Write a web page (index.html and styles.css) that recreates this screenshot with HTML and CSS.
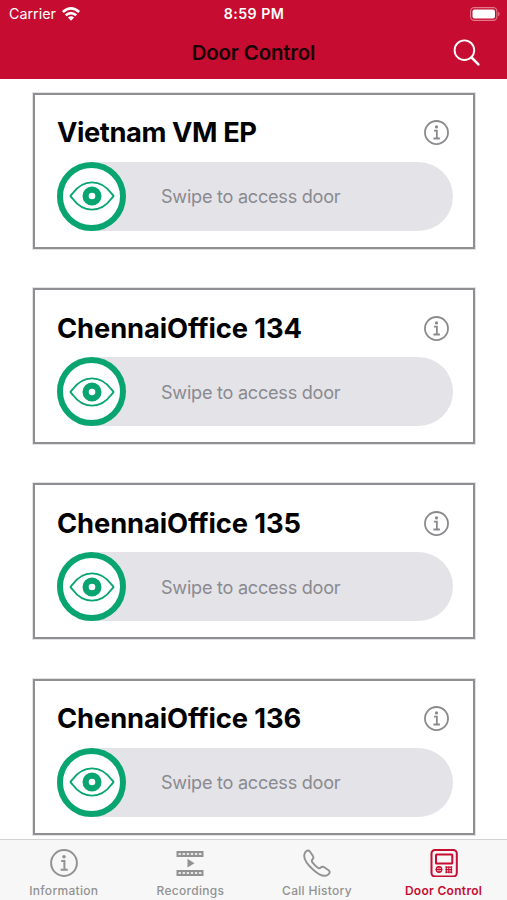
FILE: index.html
```html
<!DOCTYPE html>
<html lang="en">
<head>
<meta charset="utf-8">
<title>Door Control</title>
<link rel="stylesheet" href="styles.css">
</head>
<body>
<svg class="defs" width="0" height="0">
  <symbol id="info" viewBox="0 0 28 28">
    <circle cx="14" cy="14" r="12.9" fill="none" stroke="currentColor" stroke-width="2"/>
    <circle cx="14" cy="7.8" r="1.8" fill="currentColor"/>
    <path d="M11.200 12h3.200v8.500M10.600 20.700h7.200" fill="none" stroke="currentColor" stroke-width="2"/>
  </symbol>
  <symbol id="eye" viewBox="0 0 46 30">
    <path d="M1.500 15Q2 14 3.500 12.500C9 5 15.500 1.400 23 1.400S37 5 42.500 12.500Q44 14 44.500 15Q44 16 42.500 17.500C37 25 30.500 28.600 23 28.600S9 25 3.500 17.500Q2 16 1.500 15Z" fill="none" stroke="currentColor" stroke-width="1.900" stroke-linejoin="round"/>
    <circle cx="23" cy="15" r="6.400" fill="none" stroke="currentColor" stroke-width="6.200"/>
  </symbol>
</svg>
<div class="screen">
  <header class="header">
    <div class="status">
      <div class="carrier"><span>Carrier</span>
        <svg width="18" height="14" viewBox="0 0 18 14" fill="none" stroke="#fff" stroke-width="2.600"><path d="M.8 5Q9-2.200 17.200 5M3.700 8.300Q9 3.800 14.300 8.300"/><path d="M9 13.700 5.900 10.400Q9 7.900 12.100 10.400Z" fill="#fff" stroke="none"/></svg>
      </div>
      <span class="time">8:59 PM</span>
      <svg class="battery" width="30" height="14" viewBox="0 0 30 14"><rect x=".6" y=".6" width="26.300" height="12.800" rx="3.600" fill="none" stroke="#e27a8c" stroke-width="1.100"/><rect x="2.500" y="2.400" width="22.500" height="9.200" rx="2" fill="#fff"/><path d="M28.200 4.700q1.500.8 1.500 2.300t-1.500 2.300z" fill="#e27a8c"/></svg>
    </div>
    <div class="nav">
      <h1>Door Control</h1>
      <svg class="search" width="28" height="28" viewBox="0 0 28 28" fill="none" stroke="#fff" stroke-linecap="round"><circle cx="11.400" cy="11.200" r="9.800" stroke-width="1.900"/><path d="M18.600 18.500l6.800 6.800" stroke-width="2.500"/></svg>
    </div>
  </header>
  <main class="list">
    <section class="card">
      <div class="card-head"><h2 class="vietnam">Vietnam VM EP</h2><svg class="info"><use href="#info"/></svg></div>
      <div class="track"><div class="knob"><svg class="eye"><use href="#eye"/></svg></div><span>Swipe to access door</span></div>
    </section>
    <section class="card">
      <div class="card-head"><h2>ChennaiOffice 134</h2><svg class="info"><use href="#info"/></svg></div>
      <div class="track"><div class="knob"><svg class="eye"><use href="#eye"/></svg></div><span>Swipe to access door</span></div>
    </section>
    <section class="card">
      <div class="card-head"><h2>ChennaiOffice 135</h2><svg class="info"><use href="#info"/></svg></div>
      <div class="track"><div class="knob"><svg class="eye"><use href="#eye"/></svg></div><span>Swipe to access door</span></div>
    </section>
    <section class="card">
      <div class="card-head"><h2>ChennaiOffice 136</h2><svg class="info"><use href="#info"/></svg></div>
      <div class="track"><div class="knob"><svg class="eye"><use href="#eye"/></svg></div><span>Swipe to access door</span></div>
    </section>
  </main>
  <nav class="tabs">
    <div class="tab"><svg width="28" height="28"><use href="#info"/></svg><span>Information</span></div>
    <div class="tab">
      <svg width="28" height="28" viewBox="0 0 28 28"><path d="M.5 2h27v6H.5zM.5 21h27v6H.5z" fill="currentColor"/><path d="M2.500 5h24M2.500 24h24" stroke="#e8e8e8" stroke-width="1.900" stroke-dasharray="2.400 1.700"/><path d="M11.500 9.800l7 4.400-7 4.400z" fill="currentColor"/></svg>
      <span>Recordings</span></div>
    <div class="tab">
      <svg width="28" height="28" viewBox="0 0 28 28" fill="none" stroke="currentColor" stroke-width="1.900" stroke-linejoin="round"><path d="M2.300 3.300C3.700 1.200 5.600.8 6.900 2.500L9.800 6.700C10.900 8.300 10.500 9.400 9.300 10.600C8.300 11.600 8.600 12.300 9.600 13.600C11 15.400 12.700 17.100 14.500 18.500C15.800 19.500 16.500 19.700 17.400 18.800C18.700 17.600 19.800 17.200 21.300 18.200L25.600 21.200C27.300 22.500 27 24.300 25 25.700C21.600 28.100 16.500 26.400 10.500 21C3.500 14.700-.6 7.700 2.300 3.300Z"/></svg>
      <span>Call History</span></div>
    <div class="tab active">
      <svg width="28" height="28" viewBox="0 0 28 28" fill="none" stroke="currentColor"><rect x="1.500" y="1" width="25.300" height="26.500" rx="3.500" stroke-width="2"/><rect x="6" y="5.500" width="16.300" height="9" rx=".5" stroke-width="2"/><circle cx="9" cy="20.500" r="2.700" stroke-width="1.400"/><path d="M5.700 20.500h6.600M9 17.200v6.600" stroke-width="1"/><path d="M15.300 18.200h7M15.300 20.700h7M15.300 23.200h7M16.300 17.200v7M18.800 17.200v7M21.300 17.200v7" stroke-width="1.200"/></svg>
      <span>Door Control</span></div>
  </nav>
</div>
</body>
</html>
```
FILE: styles.css
```css
* { box-sizing: border-box; }
body { margin: 0; font-family: Inter, "Liberation Sans", sans-serif; background: #fff; }
svg { display: block; flex: none; }
h1, h2 { margin: 0; white-space: nowrap; }
.defs { position: absolute; }
.screen { height: 900px; display: flex; flex-direction: column; overflow: hidden; }
.header { height: 79px; flex: none; background: #c60c30; color: #fff; }
.status { height: 27px; display: grid; grid-template-columns: 1fr auto 1fr; align-items: center; padding: 0 7px 0 9px; }
.carrier { display: flex; align-items: center; gap: 6px; font-size: 14.300px; letter-spacing: 0; }
.time { font-size: 14.200px; font-weight: 600; letter-spacing: .45px; margin-right: 1px; }
.battery { justify-self: end; }
.nav { height: 52px; display: grid; grid-template-columns: 1fr auto 1fr; grid-template-areas: ". title search"; align-items: center; padding-right: 26px; padding-left: 26px; }
h1 { grid-area: title; color: #170005; font-size: 20.400px; font-weight: 600; letter-spacing: -.15px; padding-bottom: 2px; }
.search { grid-area: search; justify-self: end; }
.list { flex: 1; min-height: 0; overflow: hidden; padding: 13.700px 32px 0 33px; display: flex; flex-direction: column; gap: 39.400px; }
.card { height: 156px; flex: none; border: 2px solid #8e8e93; box-shadow: 0 0 0 1px #8e8e9340; padding: 21px 20px 0 22px; }
.card-head { height: 34px; display: flex; justify-content: space-between; align-items: center; }
h2 { font-size: 27.300px; font-weight: 700; letter-spacing: -.1px; color: #000; }
.vietnam { letter-spacing: -.4px; }
.info { width: 25px; height: 25px; color: #8a8a8d; margin-right: 4px; }
.track { height: 69px; margin-top: 12px; border-radius: 35px; background: #e4e3e8; display: flex; align-items: center; color: #8a8a8f; font-size: 18.100px; letter-spacing: -.25px; }
.knob { width: 69px; height: 69px; margin-right: 35px; border: 6px solid #08a571; border-radius: 50%; background: #fff; color: #08a571; display: flex; align-items: center; justify-content: center; }
.eye { width: 46px; height: 30px; }
.track span { white-space: nowrap; }
.tabs { height: 61px; flex: none; border-top: 1px solid #d2d2d3; background: #f7f7f7; display: grid; grid-template-columns: repeat(4, 126.600px); padding-top: 9px; }
.tab { display: flex; flex-direction: column; align-items: center; color: #929292; font-size: 12px; font-weight: 500; letter-spacing: .3px; padding-left: 1px; }
.tab span { margin-top: 6px; line-height: 15px; white-space: nowrap; }
.active { color: #c60c30; font-weight: 600; }
```
